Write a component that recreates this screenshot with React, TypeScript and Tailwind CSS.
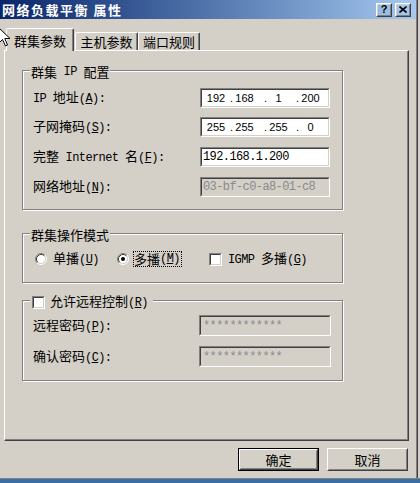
import React from "react";

function Mono({ children, className = "" }: { children: React.ReactNode; className?: string }) {
  return <span className={"font-['Liberation_Mono',monospace] text-[12px] tracking-[-0.6px] whitespace-pre " + className}>{children}</span>;
}

function Key({ k }: { k: string }) {
  return (
    <span className="font-['Liberation_Mono',monospace] text-[12px] tracking-[-0.6px]">
      (<span className="underline underline-offset-[1px]">{k}</span>)
    </span>
  );
}

function Sunken({ className = "", inner = "", children }: { className?: string; inner?: string; children?: React.ReactNode }) {
  return (
    <div className={"shrink-0 border border-t-[#808080] border-l-[#808080] border-r-white border-b-white " + className}>
      <div
        className={
          "h-full w-full border border-t-[#404040] border-l-[#404040] border-r-[#d4d0c8] border-b-[#d4d0c8] flex items-center overflow-hidden " +
          inner
        }
      >
        {children}
      </div>
    </div>
  );
}

function Check() {
  return <Sunken className="w-[13px] h-[13px]" inner="bg-white" />;
}

function Radio({ checked = false }: { checked?: boolean }) {
  return (
    <svg width="12" height="12" viewBox="0 0 12 12" className="shrink-0">
      <circle cx="6" cy="6" r="4.5" fill="#fff" />
      <path d="M2.11 9.89 A5.5 5.5 0 0 1 9.89 2.11" stroke="#808080" strokeWidth="1" fill="none" />
      <path d="M9.89 2.11 A5.5 5.5 0 0 1 2.11 9.89" stroke="#fff" strokeWidth="1" fill="none" />
      <path d="M2.82 9.18 A4.5 4.5 0 0 1 9.18 2.82" stroke="#404040" strokeWidth="1" fill="none" />
      <path d="M9.18 2.82 A4.5 4.5 0 0 1 2.82 9.18" stroke="#d4d0c8" strokeWidth="1" fill="none" />
      {checked && <circle cx="6" cy="6" r="2" fill="#000" />}
    </svg>
  );
}

function Raised({ className = "", children }: { className?: string; children?: React.ReactNode }) {
  return (
    <div className={"border border-t-white border-l-white border-r-[#404040] border-b-[#404040] " + className}>
      <div className="w-full h-full border border-t-[#d4d0c8] border-l-[#d4d0c8] border-r-[#808080] border-b-[#808080] flex items-center justify-center leading-none">
        {children}
      </div>
    </div>
  );
}

function Btn({ label, isDefault = false }: { label: string; isDefault?: boolean }) {
  if (isDefault) {
    return (
      <div className="w-[81px] h-[23px] border border-black">
        <Raised className="w-full h-full">{label}</Raised>
      </div>
    );
  }
  return <Raised className="w-[81px] h-[23px]">{label}</Raised>;
}

function Group({ h, children, legend }: { h: string; children: React.ReactNode; legend: React.ReactNode }) {
  return (
    <div className={"relative w-[321px] border border-[#808080] shadow-[inset_1px_1px_0_#fff,1px_1px_0_#fff] flex flex-col " + h}>
      <div className="absolute left-[7px] top-[-7px] h-[16px] px-[1px] bg-[#d4d0c8] flex items-center whitespace-nowrap">{legend}</div>
      {children}
    </div>
  );
}

function Cursor() {
  return (
    <svg width="13" height="20" viewBox="0 0 13 20" className="absolute left-[-2px] top-[27px] z-20">
      <path d="M0.5 0.5 L0.5 16.5 L4.5 12.5 L7.5 19 L9.5 18 L6.8 11.5 L12 11.5 Z" fill="#fff" stroke="#000" strokeWidth="1" strokeLinejoin="miter" />
    </svg>
  );
}

export default function App() {
  return (
    <div className="relative w-[420px] h-[483px] overflow-hidden bg-[#d4d0c8] flex flex-col font-['Noto_Sans_CJK_SC',sans-serif] text-[13px] leading-[16px] text-black">
      <Cursor />
      <div className="flex h-[478px]">
        <div className="w-[416px] flex flex-col">
          {/* Title bar */}
          <div className="h-[19px] w-full bg-linear-to-r from-[#0a246a] to-[#a6caf0] flex items-center">
            <span className="ml-[2px] text-white font-bold text-[13px] tracking-[1.5px] leading-none">网络负载平衡 属性</span>
            <div className="ml-auto mr-[5px] flex gap-[3px]">
              <Raised className="w-[16px] h-[14px]">
                <span className="font-['Liberation_Sans',sans-serif] font-bold text-[11px] leading-none">?</span>
              </Raised>
              <Raised className="w-[16px] h-[14px]">
                <svg width="8" height="7" viewBox="0 0 8 7">
                  <path d="M0.5 0.5 L7.5 6.5 M7.5 0.5 L0.5 6.5" stroke="#000" strokeWidth="1.6" />
                </svg>
              </Raised>
            </div>
          </div>

          {/* Tabs */}
          <div className="mt-[9px] h-[23px] flex items-start">
            <div className="relative z-10 ml-[6px] w-[68px] h-[23px] bg-[#d4d0c8] border-l border-t border-r border-l-white border-t-white border-r-[#404040] shadow-[inset_-1px_0_0_#808080] rounded-tl-[2px] rounded-tr-[2px] flex items-center justify-center pt-[1px]">
              群集参数
            </div>
            <div className="ml-[1px] mt-[4px] w-[63px] h-[18px] border-l border-t border-r border-l-white border-t-white border-r-[#404040] shadow-[inset_-1px_0_0_#808080] rounded-tl-[2px] rounded-tr-[2px] flex items-center justify-center pt-[1px]">
              主机参数
            </div>
            <div className="mt-[4px] w-[62px] h-[18px] border-l border-t border-r border-l-white border-t-white border-r-[#404040] shadow-[inset_-1px_0_0_#808080] rounded-tl-[2px] rounded-tr-[2px] flex items-center justify-center pt-[1px]">
              端口规则
            </div>
          </div>

          {/* Panel */}
          <div className="-mt-[1px] ml-[4px] w-[405px] h-[391px] border border-l-white border-t-white border-r-[#404040] border-b-[#404040] shadow-[inset_-1px_-1px_0_#808080] pl-[17px] pt-[19px] flex flex-col">
            <Group
              h="h-[140px]"
              legend={
                <>
                  群集<Mono> IP </Mono>配置
                </>
              }
            >
              <div className="mt-[17px] ml-[10px] flex flex-col">
                <div className="flex items-center h-[20px]">
                  <div className="w-[167px] whitespace-nowrap">
                    <Mono>IP </Mono>地址<Key k="A" />
                    <Mono>:</Mono>
                  </div>
                  <Sunken className="w-[130px] h-[20px]" inner="bg-white font-['Liberation_Sans',sans-serif] text-[11px]">
                    <span className="w-[28px] text-center">192</span>
                    <span className="w-[3px]">.</span>
                    <span className="w-[23px] text-center">168</span>
                    <span className="w-[11px] pl-[8px]">.</span>
                    <span className="w-[23px] text-center">1</span>
                    <span className="w-[9px] pl-[6px]">.</span>
                    <span className="w-[23px] text-center">200</span>
                  </Sunken>
                </div>
                <div className="mt-[9px] flex items-center h-[20px]">
                  <div className="w-[167px] whitespace-nowrap">
                    子网掩码<Key k="S" />
                    <Mono>:</Mono>
                  </div>
                  <Sunken className="w-[130px] h-[20px]" inner="bg-white font-['Liberation_Sans',sans-serif] text-[11px]">
                    <span className="w-[28px] text-center">255</span>
                    <span className="w-[3px]">.</span>
                    <span className="w-[23px] text-center">255</span>
                    <span className="w-[11px] pl-[8px]">.</span>
                    <span className="w-[23px] text-center">255</span>
                    <span className="w-[9px] pl-[6px]">.</span>
                    <span className="w-[23px] text-center">0</span>
                  </Sunken>
                </div>
                <div className="mt-[10px] flex items-center h-[20px]">
                  <div className="w-[167px] whitespace-nowrap">
                    完整<Mono> Internet </Mono>名<Key k="F" />
                    <Mono>:</Mono>
                  </div>
                  <Sunken className="w-[130px] h-[20px]" inner="bg-white pl-[1px]">
                    <Mono>192.168.1.200</Mono>
                  </Sunken>
                </div>
                <div className="mt-[10px] flex items-center h-[20px]">
                  <div className="w-[167px] whitespace-nowrap">
                    网络地址<Key k="N" />
                    <Mono>:</Mono>
                  </div>
                  <Sunken className="w-[130px] h-[20px]" inner="bg-[#d4d0c8] pl-[1px]">
                    <Mono className="tracking-[-0.3px] text-[#8a8a8a]">03-bf-c0-a8-01-c8</Mono>
                  </Sunken>
                </div>
              </div>
            </Group>

            <div className="mt-[23px]">
              <Group h="h-[50px]" legend={<>群集操作模式</>}>
                <div className="mt-[17px] ml-[12px] h-[16px] flex items-center whitespace-nowrap">
                  <div className="w-[82px] flex items-center">
                    <Radio />
                    <span className="ml-[6px]">
                      单播<Key k="U" />
                    </span>
                  </div>
                  <Radio checked />
                  <div className="ml-[4px] w-[49px] h-[16px] border border-dotted border-black flex items-center">
                    多播<Key k="M" />
                  </div>
                  <div className="ml-[27px]">
                    <Check />
                  </div>
                  <span className="ml-[6px]">
                    <Mono>IGMP </Mono>多播<Key k="G" />
                  </span>
                </div>
              </Group>
            </div>

            <div className="mt-[17px]">
              <Group
                h="h-[81px]"
                legend={
                  <div className="flex items-center pr-[4px]">
                    <div className="ml-[1px]">
                      <Check />
                    </div>
                    <span className="ml-[5px]">
                      允许远程控制<Key k="R" />
                    </span>
                  </div>
                }
              >
                <div className="mt-[14px] ml-[10px] flex flex-col">
                  <div className="flex items-center h-[21px]">
                    <div className="w-[166px] whitespace-nowrap">
                      远程密码<Key k="P" />
                      <Mono>:</Mono>
                    </div>
                    <Sunken className="w-[132px] h-[21px]" inner="bg-[#d4d0c8] pl-[2px]">
                      <Mono className="text-[#8a8a8a]">************</Mono>
                    </Sunken>
                  </div>
                  <div className="mt-[10px] flex items-center h-[21px]">
                    <div className="w-[166px] whitespace-nowrap">
                      确认密码<Key k="C" />
                      <Mono>:</Mono>
                    </div>
                    <Sunken className="w-[132px] h-[21px]" inner="bg-[#d4d0c8] pl-[2px]">
                      <Mono className="text-[#8a8a8a]">************</Mono>
                    </Sunken>
                  </div>
                </div>
              </Group>
            </div>
          </div>

          {/* Buttons */}
          <div className="mt-[7px] ml-[238px] flex gap-[8px]">
            <Btn label="确定" isDefault />
            <Btn label="取消" />
          </div>
        </div>
        <div className="w-[1px] bg-[#808080]" />
        <div className="w-[1px] bg-[#404040]" />
        <div className="flex-1" />
      </div>
      <div className="h-[1px] bg-[#808080]" />
      <div className="flex-1 bg-[#3a6ea5]" />
    </div>
  );
}
